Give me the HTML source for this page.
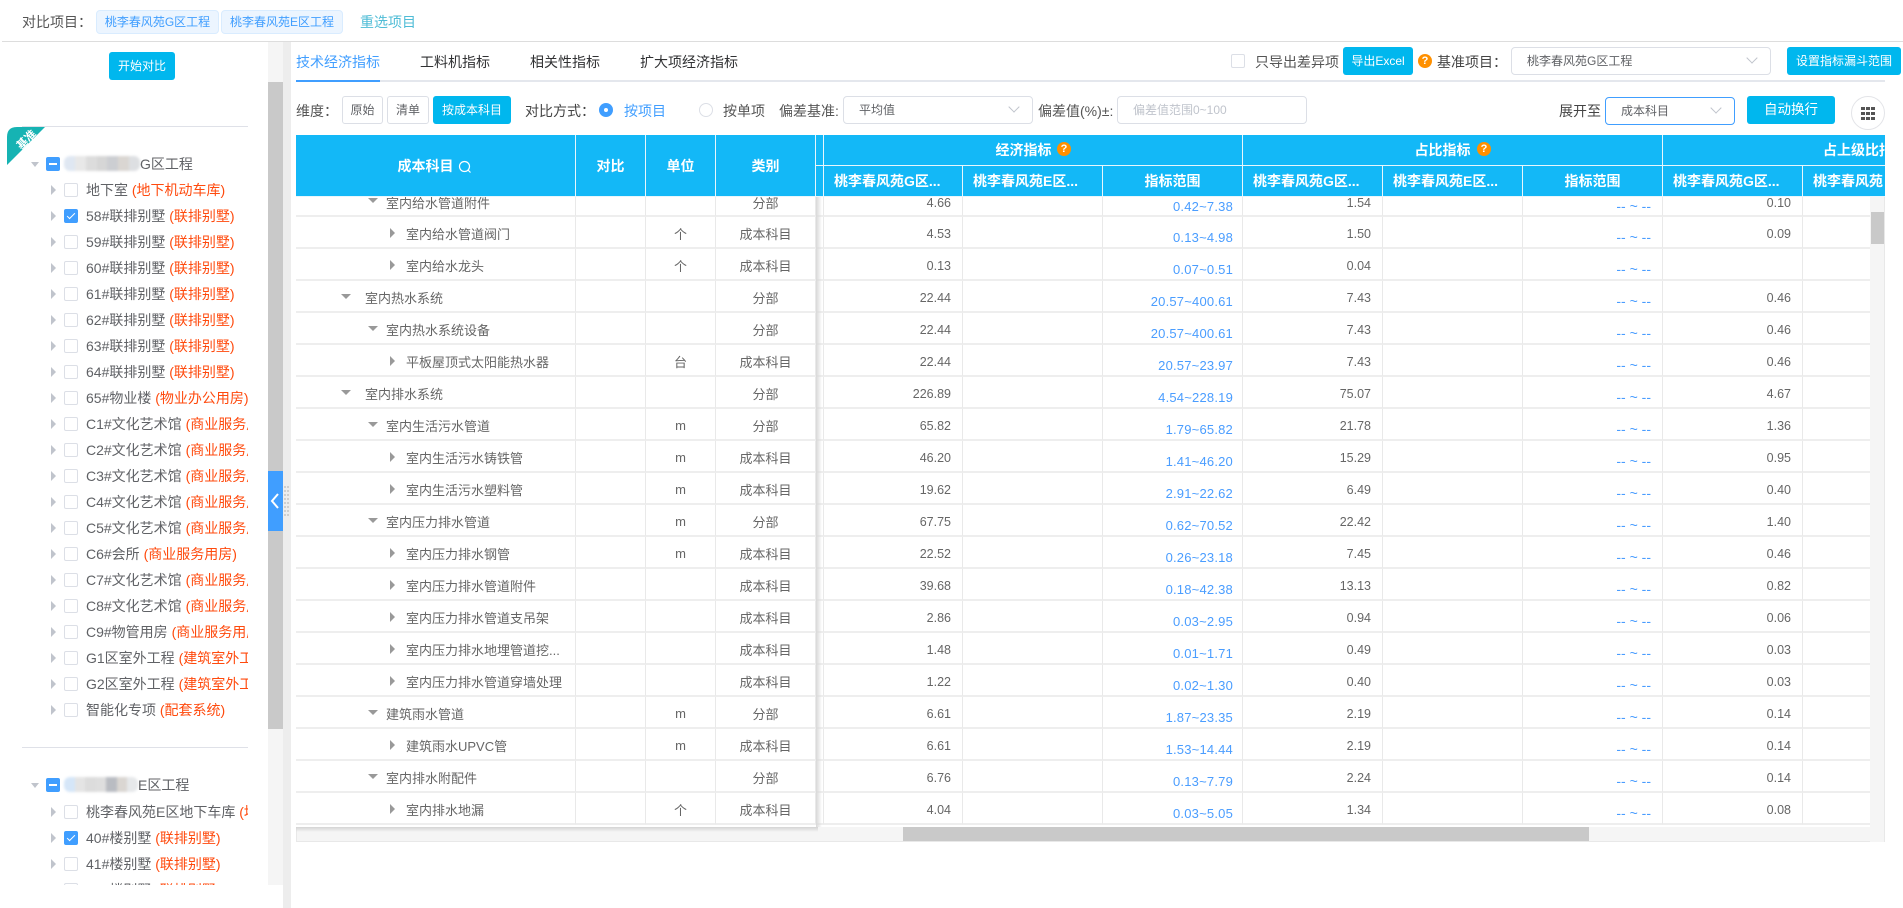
<!DOCTYPE html>
<html lang="zh"><head><meta charset="utf-8"><title>对比</title>
<style>
*{box-sizing:border-box}
html,body{margin:0;padding:0;width:1903px;height:908px;overflow:hidden;background:#fff}
body{font-family:"Liberation Sans","Noto Sans CJK SC",sans-serif;font-size:14px;color:#606266;position:relative}
.p{position:absolute;white-space:nowrap}
.btn{position:absolute;background:#00b7ee;color:#fff;border-radius:3px;font-size:12px;text-align:center}
.tag{position:absolute;top:10px;height:24px;line-height:22px;background:#ecf5ff;border:1px solid #d9ecff;border-radius:4px;color:#409eff;font-size:12px;text-align:center}
.ob{position:absolute;top:96px;height:28px;line-height:26px;border:1px solid #dcdfe6;border-radius:3px;font-size:12px;text-align:center;background:#fff}
.sel{position:absolute;border:1px solid #dcdfe6;border-radius:4px;background:#fff;font-size:12px}
.chev{position:absolute;right:14px;top:8px;width:8px;height:8px;border-right:1px solid #c0c4cc;border-bottom:1px solid #c0c4cc;transform:rotate(45deg)}
.q{position:absolute;width:14px;height:14px;border-radius:50%;background:#ff9000;color:#fff;font:bold 11px/14px "Liberation Sans",sans-serif;text-align:center}
#tree{position:absolute;left:0;top:42px;width:248px;height:843px;overflow:hidden}
.r{position:absolute;left:0;height:26px;line-height:26px;width:248px;white-space:nowrap;overflow:hidden;padding-left:86px;font-size:14px;color:#606266}
.r b{font-weight:normal;color:#ff4a0d}
.r:before{content:"";position:absolute;left:51px;top:8px;border-left:5px solid #c0c4cc;border-top:5px solid transparent;border-bottom:5px solid transparent}
.cb{position:absolute;left:64px;top:6px;width:14px;height:14px;border:1px solid #dcdfe6;border-radius:2px;background:#fff}
.ck{background:#409eff;border-color:#409eff}
.ck:after{content:"";position:absolute;left:4px;top:1px;width:3px;height:7px;border:solid #fff;border-width:0 1px 1px 0;transform:rotate(45deg)}
.ind{position:absolute;left:46px;width:14px;height:14px;background:#409eff;border-radius:2px}
.ind:after{content:"";position:absolute;left:3px;top:6px;width:8px;height:2px;background:#fff}
.rootarr{position:absolute;left:31px;width:0;height:0;border-top:5px solid #c0c4cc;border-left:4px solid transparent;border-right:4px solid transparent}
.mos{position:absolute;height:15px;filter:blur(1.2px);display:flex;overflow:hidden;border-radius:6px}
.mos i{display:block;height:100%;flex:1}
.hd{position:absolute;background:#13b8f7;color:#fff;font-weight:bold;font-size:14px;text-align:center;border-right:1px solid #e8f6fc;border-bottom:1px solid #e8f6fc;white-space:nowrap;overflow:hidden}
.sub{top:166px;height:31px;line-height:30px}
.sl{text-align:left;padding-left:10px}
#clip{position:absolute;left:296px;top:197px;width:1574px;height:630px;overflow:hidden;background:#fff}
table{position:absolute;left:0;top:-12px;border-collapse:separate;border-spacing:0;table-layout:fixed;width:1647px}
td{height:32px;padding:4px 11px 0;border-right:1px solid #e9e9e9;border-bottom:2px solid #eeeeee;font-size:12.5px;color:#666;text-align:right;white-space:nowrap;overflow:hidden;position:relative}
td.c{text-align:center;padding:2px 0 0;font-size:13px}
td.n{text-align:left;font-size:13px;padding-top:2px;padding-right:0}
td.l1{padding-left:69px}td.l2{padding-left:90px}td.l3{padding-left:110px}
td.v{color:#4a9dff;font-size:13px;letter-spacing:.2px;padding:10px 9px 0 0;font-weight:500}
td.e{color:#4a9dff;font-size:14px;padding:9px 11px 0 0}
tr:first-child td{padding-top:5px}
tr:first-child td.v{padding-top:12px}
tr:first-child td.e{padding-top:11px}
td i{position:absolute}
.l1 i{left:45px;top:13px}.l2 i{left:72px;top:13px}
.l1 i,.l2 i{border-top:5px solid #999;border-left:5px solid transparent;border-right:5px solid transparent}
.l3 i{left:94px;top:11px;border-left:5px solid #999;border-top:5px solid transparent;border-bottom:5px solid transparent}
</style></head><body>

<div class="p" style="left:22px;top:12px;font-size:14px;color:#555">对比项目：</div>
<div class="tag" style="left:96px;width:123px">桃李春风苑G区工程</div>
<div class="tag" style="left:221px;width:122px">桃李春风苑E区工程</div>
<div class="p" style="left:360px;top:12px;font-size:14px;color:#4fbcd6">重选项目</div>
<div class="p" style="left:2px;top:41px;width:1901px;height:1px;background:#ddd"></div>

<!-- sidebar -->
<div class="btn" style="left:109px;top:52px;width:66px;height:28px;line-height:28px;font-size:12px">开始对比</div>
<div class="p" style="left:268px;top:42px;width:15px;height:843px;background:#f5f5f5"></div>
<div class="p" style="left:268px;top:82px;width:15px;height:647px;background:#c9c9c9"></div>
<div class="p" style="left:283px;top:42px;width:8px;height:866px;background:#ededed"></div>
<div class="p" style="left:268px;top:471px;width:15px;height:60px;background:#409eff"></div>
<svg class="p" style="left:268px;top:491px" width="15" height="20"><path d="M10 3 L4 10 L10 17" fill="none" stroke="#fff" stroke-width="2"/></svg>
<svg class="p" style="left:284px;top:486px" width="6" height="31"><g fill="#cfcfcf"><rect x="0" y="0" width="2" height="2"/><rect x="3" y="0" width="2" height="2"/><rect x="0" y="4" width="2" height="2"/><rect x="3" y="4" width="2" height="2"/><rect x="0" y="8" width="2" height="2"/><rect x="3" y="8" width="2" height="2"/><rect x="0" y="12" width="2" height="2"/><rect x="3" y="12" width="2" height="2"/><rect x="0" y="16" width="2" height="2"/><rect x="3" y="16" width="2" height="2"/><rect x="0" y="20" width="2" height="2"/><rect x="3" y="20" width="2" height="2"/><rect x="0" y="24" width="2" height="2"/><rect x="3" y="24" width="2" height="2"/><rect x="0" y="28" width="2" height="2"/><rect x="3" y="28" width="2" height="2"/></g></svg>

<div class="p" style="left:22px;top:126px;width:226px;height:1px;background:#dfe1e8"></div>
<svg class="p" style="left:6px;top:126px" width="40" height="40"><path d="M1 39 L1 11 Q1 1 11 1 L39 1 Z" fill="#16b3b3"/><text x="11" y="24" transform="rotate(-45 13 19)" font-size="11" font-weight="bold" fill="#fff" font-family="Liberation Sans,Noto Sans CJK SC,sans-serif">基准</text></svg>

<div id="tree">
<div class="rootarr" style="top:120px"></div><div class="ind" style="top:115px"></div>
<div class="mos" style="left:64px;top:114px;width:76px"><i style="background:#dfe7f2"></i><i style="background:#e8e8e8"></i><i style="background:#dcdcdc"></i><i style="background:#d6d6d6"></i><i style="background:#ccced2"></i><i style="background:#dad6d2"></i><i style="background:#dddfe2"></i></div>
<div class="p" style="left:140px;top:112px;font-size:14px;color:#606266">G区工程</div>
<div class="r" style="top:135px"><span class="cb"></span>地下室 <b>(地下机动车库)</b></div>
<div class="r" style="top:161px"><span class="cb ck"></span>58#联排别墅 <b>(联排别墅)</b></div>
<div class="r" style="top:187px"><span class="cb"></span>59#联排别墅 <b>(联排别墅)</b></div>
<div class="r" style="top:213px"><span class="cb"></span>60#联排别墅 <b>(联排别墅)</b></div>
<div class="r" style="top:239px"><span class="cb"></span>61#联排别墅 <b>(联排别墅)</b></div>
<div class="r" style="top:265px"><span class="cb"></span>62#联排别墅 <b>(联排别墅)</b></div>
<div class="r" style="top:291px"><span class="cb"></span>63#联排别墅 <b>(联排别墅)</b></div>
<div class="r" style="top:317px"><span class="cb"></span>64#联排别墅 <b>(联排别墅)</b></div>
<div class="r" style="top:343px"><span class="cb"></span>65#物业楼 <b>(物业办公用房)</b></div>
<div class="r" style="top:369px"><span class="cb"></span>C1#文化艺术馆 <b>(商业服务用房)</b></div>
<div class="r" style="top:395px"><span class="cb"></span>C2#文化艺术馆 <b>(商业服务用房)</b></div>
<div class="r" style="top:421px"><span class="cb"></span>C3#文化艺术馆 <b>(商业服务用房)</b></div>
<div class="r" style="top:447px"><span class="cb"></span>C4#文化艺术馆 <b>(商业服务用房)</b></div>
<div class="r" style="top:473px"><span class="cb"></span>C5#文化艺术馆 <b>(商业服务用房)</b></div>
<div class="r" style="top:499px"><span class="cb"></span>C6#会所 <b>(商业服务用房)</b></div>
<div class="r" style="top:525px"><span class="cb"></span>C7#文化艺术馆 <b>(商业服务用房)</b></div>
<div class="r" style="top:551px"><span class="cb"></span>C8#文化艺术馆 <b>(商业服务用房)</b></div>
<div class="r" style="top:577px"><span class="cb"></span>C9#物管用房 <b>(商业服务用房)</b></div>
<div class="r" style="top:603px"><span class="cb"></span>G1区室外工程 <b>(建筑室外工程)</b></div>
<div class="r" style="top:629px"><span class="cb"></span>G2区室外工程 <b>(建筑室外工程)</b></div>
<div class="r" style="top:655px"><span class="cb"></span>智能化专项 <b>(配套系统)</b></div>
<div class="p" style="left:22px;top:705px;width:226px;height:1px;background:#dfe1e8"></div>
<div class="rootarr" style="top:741px"></div><div class="ind" style="top:736px"></div>
<div class="mos" style="left:64px;top:735px;width:74px"><i style="background:#d5e6f8"></i><i style="background:#e4e4e4"></i><i style="background:#dcdcdc"></i><i style="background:#dedede"></i><i style="background:#b9bcc2"></i><i style="background:#dad6d2"></i><i style="background:#e6e8ea"></i></div>
<div class="p" style="left:138px;top:733px;font-size:14px;color:#606266">E区工程</div>
<div class="r" style="top:757px"><span class="cb"></span>桃李春风苑E区地下车库 <b>(地下机动车库)</b></div>
<div class="r" style="top:783px"><span class="cb ck"></span>40#楼别墅 <b>(联排别墅)</b></div>
<div class="r" style="top:809px"><span class="cb"></span>41#楼别墅 <b>(联排别墅)</b></div>
<div class="r" style="top:835px"><span class="cb"></span>42#楼别墅 <b>(联排别墅)</b></div>
</div>

<!-- tabs -->
<div class="p" style="left:296px;top:80px;width:1589px;height:2px;background:#e4e7ed"></div>
<div class="p" style="left:296px;top:80px;width:84px;height:2px;background:#409eff"></div>
<div class="p" style="left:296px;top:52px;color:#409eff">技术经济指标</div>
<div class="p" style="left:420px;top:52px;color:#303133">工料机指标</div>
<div class="p" style="left:530px;top:52px;color:#303133">相关性指标</div>
<div class="p" style="left:640px;top:52px;color:#303133">扩大项经济指标</div>

<div class="p" style="left:1231px;top:54px;width:14px;height:14px;border:1px solid #dcdfe6;border-radius:2px"></div>
<div class="p" style="left:1255px;top:52px;color:#555">只导出差异项</div>
<div class="btn" style="left:1343px;top:47px;width:70px;height:28px;line-height:28px">导出Excel</div>
<div class="q" style="left:1418px;top:54px">?</div>
<div class="p" style="left:1437px;top:52px;color:#444">基准项目：</div>
<div class="sel" style="left:1511px;top:47px;width:260px;height:28px;line-height:26px;padding-left:15px">桃李春风苑G区工程<span class="chev" style="top:6px"></span></div>
<div class="btn" style="left:1787px;top:47px;width:114px;height:28px;line-height:28px">设置指标漏斗范围</div>

<!-- toolbar -->
<div class="p" style="left:296px;top:101px;color:#555">维度：</div>
<div class="ob" style="left:342px;width:41px">原始</div>
<div class="ob" style="left:387px;width:42px">清单</div>
<div class="btn" style="left:433px;top:96px;width:78px;height:28px;line-height:28px">按成本科目</div>
<div class="p" style="left:525px;top:101px;color:#444">对比方式：</div>
<div class="p" style="left:599px;top:103px;width:14px;height:14px;border-radius:50%;background:#409eff"><div style="width:4px;height:4px;border-radius:50%;background:#fff;margin:5px"></div></div>
<div class="p" style="left:624px;top:101px;color:#409eff">按项目</div>
<div class="p" style="left:699px;top:103px;width:14px;height:14px;border-radius:50%;border:1px solid #dcdfe6"></div>
<div class="p" style="left:723px;top:101px;color:#555">按单项</div>
<div class="p" style="left:779px;top:101px;color:#555">偏差基准:</div>
<div class="sel" style="left:843px;top:96px;width:190px;height:28px;line-height:26px;padding-left:15px">平均值<span class="chev" style="top:6px"></span></div>
<div class="p" style="left:1038px;top:101px;color:#555">偏差值(%)±:</div>
<div class="sel" style="left:1117px;top:96px;width:190px;height:28px;line-height:26px;padding-left:15px;color:#c0c4cc">偏差值范围0~100</div>
<div class="p" style="left:1559px;top:101px;color:#444">展开至</div>
<div class="sel" style="left:1605px;top:97px;width:130px;height:28px;line-height:26px;padding-left:15px;border-color:#409eff">成本科目<span class="chev" style="top:6px"></span></div>
<div class="btn" style="left:1747px;top:96px;width:88px;height:28px;line-height:28px;font-size:13.5px">自动换行</div>
<svg class="p" style="left:1851px;top:96px" width="34" height="34"><circle cx="17" cy="17" r="16.5" fill="#fff" stroke="#e3e4e8"/><g fill="#555"><rect x="10" y="11" width="4" height="3"/><rect x="15" y="11" width="4" height="3"/><rect x="20" y="11" width="4" height="3"/><rect x="10" y="16" width="4" height="3"/><rect x="15" y="16" width="4" height="3"/><rect x="20" y="16" width="4" height="3"/><rect x="10" y="21" width="4" height="3"/><rect x="15" y="21" width="4" height="3"/><rect x="20" y="21" width="4" height="3"/></g></svg>

<!-- table body -->
<div id="clip"><table>
<colgroup><col style="width:280px"><col style="width:70px"><col style="width:70px"><col style="width:100px"><col style="width:8px"><col style="width:139px"><col style="width:140px"><col style="width:140px"><col style="width:140px"><col style="width:140px"><col style="width:140px"><col style="width:140px"><col style="width:140px"></colgroup>
<tr><td class="n l2"><i></i>室内给水管道附件</td><td></td><td class="c"></td><td class="c">分部</td><td></td><td>4.66</td><td></td><td class="v">0.42~7.38</td><td>1.54</td><td></td><td class="e">-- ~ --</td><td>0.10</td><td></td></tr>
<tr><td class="n l3"><i></i>室内给水管道阀门</td><td></td><td class="c">个</td><td class="c">成本科目</td><td></td><td>4.53</td><td></td><td class="v">0.13~4.98</td><td>1.50</td><td></td><td class="e">-- ~ --</td><td>0.09</td><td></td></tr>
<tr><td class="n l3"><i></i>室内给水龙头</td><td></td><td class="c">个</td><td class="c">成本科目</td><td></td><td>0.13</td><td></td><td class="v">0.07~0.51</td><td>0.04</td><td></td><td class="e">-- ~ --</td><td></td><td></td></tr>
<tr><td class="n l1"><i></i>室内热水系统</td><td></td><td class="c"></td><td class="c">分部</td><td></td><td>22.44</td><td></td><td class="v">20.57~400.61</td><td>7.43</td><td></td><td class="e">-- ~ --</td><td>0.46</td><td></td></tr>
<tr><td class="n l2"><i></i>室内热水系统设备</td><td></td><td class="c"></td><td class="c">分部</td><td></td><td>22.44</td><td></td><td class="v">20.57~400.61</td><td>7.43</td><td></td><td class="e">-- ~ --</td><td>0.46</td><td></td></tr>
<tr><td class="n l3"><i></i>平板屋顶式太阳能热水器</td><td></td><td class="c">台</td><td class="c">成本科目</td><td></td><td>22.44</td><td></td><td class="v">20.57~23.97</td><td>7.43</td><td></td><td class="e">-- ~ --</td><td>0.46</td><td></td></tr>
<tr><td class="n l1"><i></i>室内排水系统</td><td></td><td class="c"></td><td class="c">分部</td><td></td><td>226.89</td><td></td><td class="v">4.54~228.19</td><td>75.07</td><td></td><td class="e">-- ~ --</td><td>4.67</td><td></td></tr>
<tr><td class="n l2"><i></i>室内生活污水管道</td><td></td><td class="c">m</td><td class="c">分部</td><td></td><td>65.82</td><td></td><td class="v">1.79~65.82</td><td>21.78</td><td></td><td class="e">-- ~ --</td><td>1.36</td><td></td></tr>
<tr><td class="n l3"><i></i>室内生活污水铸铁管</td><td></td><td class="c">m</td><td class="c">成本科目</td><td></td><td>46.20</td><td></td><td class="v">1.41~46.20</td><td>15.29</td><td></td><td class="e">-- ~ --</td><td>0.95</td><td></td></tr>
<tr><td class="n l3"><i></i>室内生活污水塑料管</td><td></td><td class="c">m</td><td class="c">成本科目</td><td></td><td>19.62</td><td></td><td class="v">2.91~22.62</td><td>6.49</td><td></td><td class="e">-- ~ --</td><td>0.40</td><td></td></tr>
<tr><td class="n l2"><i></i>室内压力排水管道</td><td></td><td class="c">m</td><td class="c">分部</td><td></td><td>67.75</td><td></td><td class="v">0.62~70.52</td><td>22.42</td><td></td><td class="e">-- ~ --</td><td>1.40</td><td></td></tr>
<tr><td class="n l3"><i></i>室内压力排水钢管</td><td></td><td class="c">m</td><td class="c">成本科目</td><td></td><td>22.52</td><td></td><td class="v">0.26~23.18</td><td>7.45</td><td></td><td class="e">-- ~ --</td><td>0.46</td><td></td></tr>
<tr><td class="n l3"><i></i>室内压力排水管道附件</td><td></td><td class="c"></td><td class="c">成本科目</td><td></td><td>39.68</td><td></td><td class="v">0.18~42.38</td><td>13.13</td><td></td><td class="e">-- ~ --</td><td>0.82</td><td></td></tr>
<tr><td class="n l3"><i></i>室内压力排水管道支吊架</td><td></td><td class="c"></td><td class="c">成本科目</td><td></td><td>2.86</td><td></td><td class="v">0.03~2.95</td><td>0.94</td><td></td><td class="e">-- ~ --</td><td>0.06</td><td></td></tr>
<tr><td class="n l3"><i></i>室内压力排水地埋管道挖...</td><td></td><td class="c"></td><td class="c">成本科目</td><td></td><td>1.48</td><td></td><td class="v">0.01~1.71</td><td>0.49</td><td></td><td class="e">-- ~ --</td><td>0.03</td><td></td></tr>
<tr><td class="n l3"><i></i>室内压力排水管道穿墙处理</td><td></td><td class="c"></td><td class="c">成本科目</td><td></td><td>1.22</td><td></td><td class="v">0.02~1.30</td><td>0.40</td><td></td><td class="e">-- ~ --</td><td>0.03</td><td></td></tr>
<tr><td class="n l2"><i></i>建筑雨水管道</td><td></td><td class="c">m</td><td class="c">分部</td><td></td><td>6.61</td><td></td><td class="v">1.87~23.35</td><td>2.19</td><td></td><td class="e">-- ~ --</td><td>0.14</td><td></td></tr>
<tr><td class="n l3"><i></i>建筑雨水UPVC管</td><td></td><td class="c">m</td><td class="c">成本科目</td><td></td><td>6.61</td><td></td><td class="v">1.53~14.44</td><td>2.19</td><td></td><td class="e">-- ~ --</td><td>0.14</td><td></td></tr>
<tr><td class="n l2"><i></i>室内排水附配件</td><td></td><td class="c"></td><td class="c">分部</td><td></td><td>6.76</td><td></td><td class="v">0.13~7.79</td><td>2.24</td><td></td><td class="e">-- ~ --</td><td>0.14</td><td></td></tr>
<tr><td class="n l3"><i></i>室内排水地漏</td><td></td><td class="c">个</td><td class="c">成本科目</td><td></td><td>4.04</td><td></td><td class="v">0.03~5.05</td><td>1.34</td><td></td><td class="e">-- ~ --</td><td>0.08</td><td></td></tr>
</table></div>

<!-- scrollbars -->
<div class="p" style="left:296px;top:827px;width:1589px;height:15px;background:#f5f5f5;border:1px solid #e8e8e8;border-top:0"></div>
<div class="p" style="left:903px;top:827px;width:686px;height:14px;background:#c9c9c9"></div>
<div class="p" style="left:1870px;top:197px;width:15px;height:645px;background:#f5f5f5;border-right:1px solid #e8e8e8"></div>
<div class="p" style="left:1871px;top:212px;width:13px;height:32px;background:#c9c9c9"></div>
<!-- fixed shadow -->
<div class="p" style="left:816px;top:197px;width:6px;height:630px;background:linear-gradient(90deg,#d8d8d8,#fff0)"></div>
<div class="p" style="left:296px;top:827px;width:522px;height:5px;background:linear-gradient(180deg,#d4d4d4,#f5f5f500)"></div>

<!-- header -->
<div class="p" style="left:296px;top:135px;width:1589px;height:62px;background:#13b8f7"></div>
<div class="hd" style="left:296px;top:135px;width:280px;height:62px;line-height:62px;padding-right:20px">成本科目</div>
<svg class="p" style="left:458px;top:160px" width="14" height="14"><circle cx="6.5" cy="6.5" r="5" fill="none" stroke="#fff" stroke-width="1.2"/><path d="M10 10 L12.5 12.5" stroke="#fff" stroke-width="1.2"/></svg>
<div class="hd" style="left:576px;top:135px;width:70px;height:62px;line-height:62px">对比</div>
<div class="hd" style="left:646px;top:135px;width:70px;height:62px;line-height:62px">单位</div>
<div class="hd" style="left:716px;top:135px;width:100px;height:62px;line-height:62px">类别</div>
<div class="hd" style="left:816px;top:135px;width:8px;height:31px"></div>
<div class="hd" style="left:816px;top:166px;width:8px;height:31px"></div>

<div class="hd" style="left:824px;top:135px;width:419px;height:31px;line-height:30px;padding-right:19px">经济指标</div>
<div class="q" style="left:1057px;top:142px">?</div>
<div class="hd" style="left:1243px;top:135px;width:420px;height:31px;line-height:30px;padding-right:20px">占比指标</div>
<div class="q" style="left:1477px;top:142px">?</div>
<div class="hd" style="left:1663px;top:135px;width:222px;height:31px;line-height:30px;text-align:left;padding-left:160px;border-right:0">占上级比指标</div>

<div class="hd sub sl" style="left:824px;width:139px">桃李春风苑G区...</div>
<div class="hd sub sl" style="left:963px;width:140px">桃李春风苑E区...</div>
<div class="hd sub" style="left:1103px;width:140px">指标范围</div>
<div class="hd sub sl" style="left:1243px;width:140px">桃李春风苑G区...</div>
<div class="hd sub sl" style="left:1383px;width:140px">桃李春风苑E区...</div>
<div class="hd sub" style="left:1523px;width:140px">指标范围</div>
<div class="hd sub sl" style="left:1663px;width:140px">桃李春风苑G区...</div>
<div class="hd sub sl" style="left:1803px;width:82px;border-right:0">桃李春风苑</div>
</body></html>
